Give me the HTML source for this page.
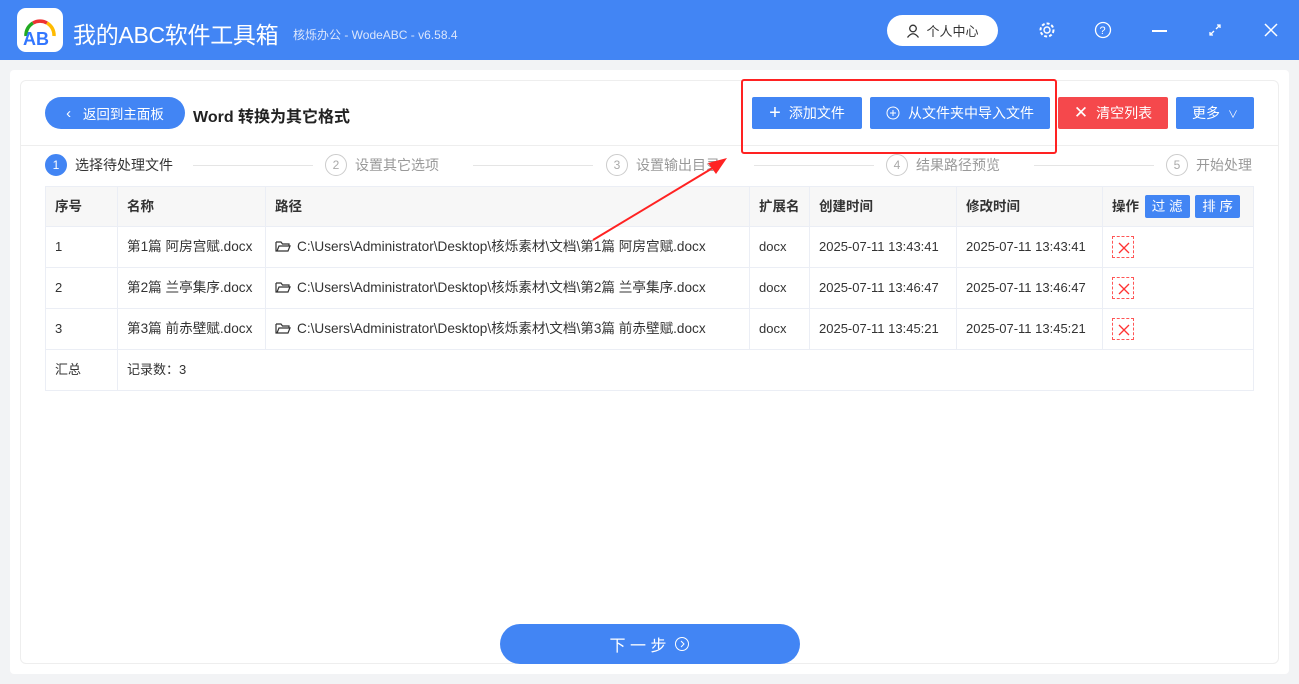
<!DOCTYPE html>
<html><head><meta charset="utf-8"><style>
*{box-sizing:border-box;margin:0;padding:0}
body{width:1299px;height:684px;background:#f2f3f5;font-family:"Liberation Sans","Noto Sans CJK SC",sans-serif;position:relative;overflow:hidden;color:#333}
.hdr{position:absolute;left:0;top:0;width:1299px;height:60px;background:#4285f4}
.abs{position:absolute}
.btn{position:absolute;height:32px;border-radius:2px;color:#fff;font-size:14px;display:flex;align-items:center;justify-content:center;gap:8px}
table{position:absolute;left:45px;top:186px;width:1209px;border-collapse:collapse;font-size:13px;table-layout:fixed}
td{border:1px solid #ebeef5;padding:0 9px;height:41px;white-space:nowrap;line-height:16px;vertical-align:middle;overflow:hidden}
.n{font-size:13.6px}
tr.h td{background:#f7f7f7;font-weight:bold;height:40px;font-size:13.5px}
.step{position:absolute;top:154px;display:flex;align-items:center;font-size:14px;color:#999}
.c{width:22px;height:22px;border-radius:50%;border:1px solid #ccc;font-size:12px;display:flex;align-items:center;justify-content:center;margin-right:8px;color:#aaa}
.line{position:absolute;top:165px;height:1px;background:#e5e5e5}
.x{display:inline-block;width:22px;height:22px;border:1px dashed #f55;vertical-align:middle}
.f{vertical-align:-2px;margin-right:6px}
</style></head><body>
<div class="hdr"></div>
<div class="abs" style="left:17px;top:8px;width:46px;height:44px;background:#fff;border-radius:9px">
<svg width="46" height="44"><path d="M9 28 A14 14 0 0 1 16 15" stroke="#2a2" stroke-width="3.5" fill="none"/><path d="M16 15 A14 14 0 0 1 30 15" stroke="#e33" stroke-width="3.5" fill="none"/><path d="M30 15 A14 14 0 0 1 37 28" stroke="#fb0" stroke-width="3.5" fill="none"/><text x="6" y="37" font-size="18" font-weight="bold" fill="#37f" font-family="Liberation Sans">AB</text></svg></div>
<div class="abs" style="left:73px;top:16px;color:#fff;font-size:23px;letter-spacing:-0.3px">我的ABC软件工具箱</div>
<div class="abs" style="left:293px;top:26px;color:#dbe6fc;font-size:12px">核烁办公 - WodeABC - v6.58.4</div>
<div class="abs" style="left:887px;top:15px;width:111px;height:31px;background:#fff;border-radius:16px;font-size:13px;color:#333;display:flex;align-items:center;justify-content:center;gap:6px"><svg width="14" height="14"><circle cx="7" cy="4.5" r="3.3" stroke="#333" stroke-width="1.3" fill="none"/><path d="M1.5 13.5 Q7 6 12.5 13.5" stroke="#333" stroke-width="1.3" fill="none"/></svg>个人中心</div>
<svg class="abs" style="left:1038px;top:21px" width="18" height="18"><circle cx="9" cy="9" r="3" stroke="#fff" stroke-width="1.4" fill="none"/><circle cx="9" cy="9" r="6.5" stroke="#fff" stroke-width="2" fill="none" stroke-dasharray="3 2"/></svg>
<svg class="abs" style="left:1094px;top:21px" width="18" height="18"><circle cx="9" cy="9" r="7.5" stroke="#fff" stroke-width="1.3" fill="none"/><text x="5.5" y="13" fill="#fff" font-size="11" font-family="Liberation Sans">?</text></svg>
<div class="abs" style="left:1152px;top:30px;width:15px;height:1.5px;background:#fff"></div>
<svg class="abs" style="left:1208px;top:23px" width="14" height="14"><path d="M8 6 L12 2 M9 2h3v3 M6 8 L2 12 M2 9v3h3" stroke="#fff" stroke-width="1.3" fill="none"/></svg>
<svg class="abs" style="left:1264px;top:23px" width="14" height="14"><path d="M1 1L13 13M13 1L1 13" stroke="#fff" stroke-width="1.5"/></svg>
<div class="abs" style="left:10px;top:70px;width:1279px;height:604px;background:#fff;border-radius:4px"></div>
<div class="abs" style="left:20px;top:80px;width:1259px;height:584px;border:1px solid #eee;border-radius:6px"></div>
<div class="abs" style="left:21px;top:145px;width:1257px;height:1px;background:#eee"></div>
<div class="btn" style="left:45px;top:97px;width:140px;border-radius:16px;background:#4285f4;font-size:13.5px"><span style="font-size:15px">‹</span>&nbsp;返回到主面板</div>
<div class="abs" style="left:193px;top:103px;font-size:16px;font-weight:bold;color:#222">Word 转换为其它格式</div>
<div class="btn" style="left:752px;top:97px;width:110px;background:#4285f4"><span style="font-size:20px">+</span>添加文件</div>
<div class="btn" style="left:870px;top:97px;width:180px;background:#4285f4"><svg width="14" height="14"><circle cx="7" cy="7" r="6" stroke="#fff" fill="none"/><path d="M4 7h6M7 4v6" stroke="#fff"/></svg>从文件夹中导入文件</div>
<div class="btn" style="left:1058px;top:97px;width:110px;background:#f5484c"><span style="font-size:17px">✕</span>清空列表</div>
<div class="btn" style="left:1176px;top:97px;width:78px;background:#4285f4">更多 <span style="font-size:10px">∨</span></div>
<div class="abs" style="left:741px;top:79px;width:316px;height:75px;border:2px solid #f22;border-radius:3px"></div>
<div class="step" style="left:45px;color:#333"><div class="c" style="background:#4285f4;border-color:#4285f4;color:#fff">1</div>选择待处理文件</div>
<div class="line" style="left:193px;width:120px"></div>
<div class="step" style="left:325px"><div class="c">2</div>设置其它选项</div>
<div class="line" style="left:473px;width:120px"></div>
<div class="step" style="left:606px"><div class="c">3</div>设置输出目录</div>
<div class="line" style="left:754px;width:120px"></div>
<div class="step" style="left:886px"><div class="c">4</div>结果路径预览</div>
<div class="line" style="left:1034px;width:120px"></div>
<div class="step" style="left:1166px"><div class="c">5</div>开始处理</div>
<table>
<colgroup><col style="width:72px"><col style="width:148px"><col style="width:484px"><col style="width:60px"><col style="width:147px"><col style="width:146px"><col></colgroup>
<tr class="h"><td>序号</td><td>名称</td><td>路径</td><td>扩展名</td><td>创建时间</td><td>修改时间</td><td>操作 <span style="background:#4285f4;color:#fff;padding:4px 7px;border-radius:2px;font-weight:normal;margin-left:2px">过 滤</span> <span style="background:#4285f4;color:#fff;padding:4px 7px;border-radius:2px;font-weight:normal;margin-left:2px">排 序</span></td></tr>
<tr><td>1</td><td class="n">第1篇 阿房宫赋.docx</td><td class="n"><svg class="f" width="16" height="13"><path d="M1 2h5l1.5 2H14v2 M1 2v9h12l2-5H4l-2 5" stroke="#333" stroke-width="1.2" fill="none"/></svg>C:\Users\Administrator\Desktop\核烁素材\文档\第1篇 阿房宫赋.docx</td><td>docx</td><td>2025-07-11 13:43:41</td><td>2025-07-11 13:43:41</td><td><svg class="x" width="22" height="22"><path d="M6 6L16 16M16 6L6 16" stroke="#f33" stroke-width="1.3"/></svg></td></tr>
<tr><td>2</td><td class="n">第2篇 兰亭集序.docx</td><td class="n"><svg class="f" width="16" height="13"><path d="M1 2h5l1.5 2H14v2 M1 2v9h12l2-5H4l-2 5" stroke="#333" stroke-width="1.2" fill="none"/></svg>C:\Users\Administrator\Desktop\核烁素材\文档\第2篇 兰亭集序.docx</td><td>docx</td><td>2025-07-11 13:46:47</td><td>2025-07-11 13:46:47</td><td><svg class="x" width="22" height="22"><path d="M6 6L16 16M16 6L6 16" stroke="#f33" stroke-width="1.3"/></svg></td></tr>
<tr><td>3</td><td class="n">第3篇 前赤壁赋.docx</td><td class="n"><svg class="f" width="16" height="13"><path d="M1 2h5l1.5 2H14v2 M1 2v9h12l2-5H4l-2 5" stroke="#333" stroke-width="1.2" fill="none"/></svg>C:\Users\Administrator\Desktop\核烁素材\文档\第3篇 前赤壁赋.docx</td><td>docx</td><td>2025-07-11 13:45:21</td><td>2025-07-11 13:45:21</td><td><svg class="x" width="22" height="22"><path d="M6 6L16 16M16 6L6 16" stroke="#f33" stroke-width="1.3"/></svg></td></tr>
<tr><td style="height:39px">汇总</td><td colspan="6">记录数：3</td></tr>
</table>
<svg class="abs" style="left:0;top:0" width="1299" height="684"><line x1="593" y1="240" x2="716" y2="166" stroke="#f22" stroke-width="2"/><path d="M727 158 L708 163 L716 174Z" fill="#f22"/></svg>
<div class="btn" style="left:500px;top:624px;width:300px;height:40px;border-radius:20px;background:#4285f4;font-size:16px">下 一 步 <svg width="16" height="16"><circle cx="8" cy="8" r="6.5" stroke="#fff" fill="none"/><path d="M7 5l3 3-3 3" stroke="#fff" fill="none"/></svg></div>
</body></html>
